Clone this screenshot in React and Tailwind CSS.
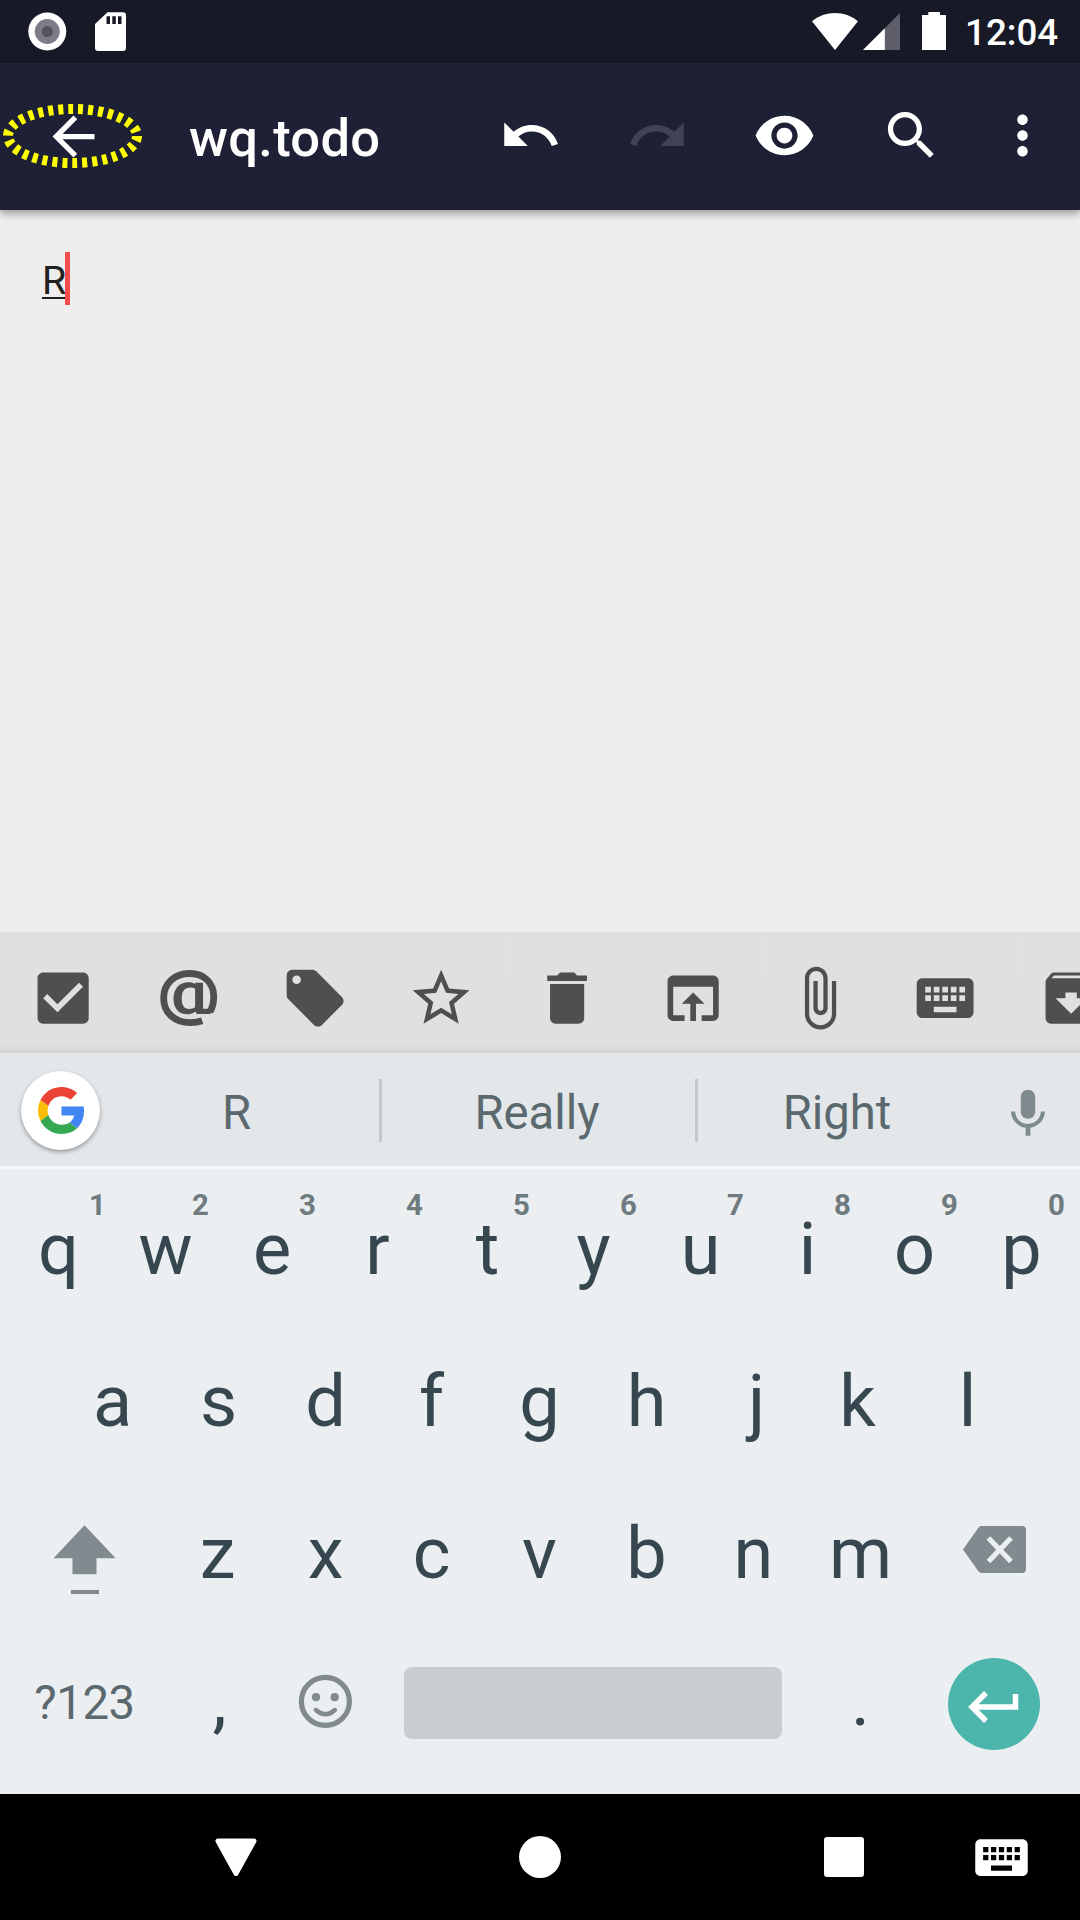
import React from 'react';

const P = {
  back: 'M20 11H7.83l5.59-5.59L12 4l-8 8 8 8 1.41-1.41L7.83 13H20v-2z',
  undo: 'M12.5 8c-2.65 0-5.05.99-6.9 2.6L2 7v9h9l-3.62-3.62c1.39-1.16 3.16-1.88 5.12-1.88 3.54 0 6.55 2.31 7.6 5.5l2.37-.78C21.08 11.03 17.15 8 12.5 8z',
  redo: 'M18.4 10.6C16.55 8.99 14.15 8 11.5 8c-4.65 0-8.58 3.03-9.96 7.22L3.9 16c1.05-3.19 4.05-5.5 7.6-5.5 1.95 0 3.73.72 5.12 1.88L13 16h9V7l-3.6 3.6z',
  eye: 'M12 4.5C7 4.5 2.73 7.61 1 12c1.73 4.39 6 7.5 11 7.5s9.27-3.11 11-7.5c-1.73-4.39-6-7.5-11-7.5zM12 17c-2.76 0-5-2.24-5-5s2.24-5 5-5 5 2.24 5 5-2.24 5-5 5zm0-8c-1.66 0-3 1.34-3 3s1.34 3 3 3 3-1.34 3-3-1.34-3-3-3z',
  search: 'M15.5 14h-.79l-.28-.27C15.41 12.59 16 11.11 16 9.5 16 5.91 13.09 3 9.5 3S3 5.91 3 9.5 5.91 16 9.5 16c1.61 0 3.09-.59 4.23-1.57l.27.28v.79l5 4.99L20.49 19l-4.99-5zm-6 0C7.01 14 5 11.99 5 9.5S7.01 5 9.5 5 14 7.01 14 9.5 11.99 14 9.5 14z',
  more: 'M12 8c1.1 0 2-.9 2-2s-.9-2-2-2-2 .9-2 2 .9 2 2 2zm0 2c-1.1 0-2 .9-2 2s.9 2 2 2 2-.9 2-2-.9-2-2-2zm0 6c-1.1 0-2 .9-2 2s.9 2 2 2 2-.9 2-2-.9-2-2-2z',
  check: 'M19 3H5c-1.11 0-2 .9-2 2v14c0 1.1.89 2 2 2h14c1.11 0 2-.9 2-2V5c0-1.1-.89-2-2-2zm-9 14l-5-5 1.41-1.41L10 14.17l7.59-7.59L19 8l-9 9z',
  tag: 'M21.41 11.58l-9-9C12.05 2.22 11.55 2 11 2H4c-1.1 0-2 .9-2 2v7c0 .55.22 1.05.59 1.42l9 9c.36.36.86.58 1.41.58.55 0 1.05-.22 1.41-.59l7-7c.37-.36.59-.86.59-1.41 0-.55-.23-1.06-.59-1.42zM5.5 7C4.67 7 4 6.33 4 5.5S4.67 4 5.5 4 7 4.67 7 5.5 6.33 7 5.5 7z',
  star: 'M22 9.24l-7.19-.62L12 2 9.19 8.63 2 9.24l5.46 4.73L5.82 21 12 17.27 18.18 21l-1.63-7.03L22 9.24zM12 15.4l-3.76 2.27 1-4.28-3.32-2.88 4.38-.38L12 6.1l1.71 4.04 4.38.38-3.32 2.88 1 4.28L12 15.4z',
  trash: 'M6 19c0 1.1.9 2 2 2h8c1.1 0 2-.9 2-2V7H6v12zM19 4h-3.5l-1-1h-5l-1 1H5v2h14V4z',
  open: 'M19 4H5c-1.11 0-2 .9-2 2v12c0 1.1.89 2 2 2h4v-2H5V8h14v10h-4v2h4c1.1 0 2-.9 2-2V6c0-1.1-.89-2-2-2zm-7 6l-4 4h3v6h2v-6h3l-4-4z',
  clip: 'M16.5 6v11.5c0 2.21-1.79 4-4 4s-4-1.79-4-4V5c0-1.38 1.12-2.5 2.5-2.5s2.5 1.12 2.5 2.5v10.5c0 .55-.45 1-1 1s-1-.45-1-1V6H10v9.5c0 1.38 1.12 2.5 2.5 2.5s2.5-1.12 2.5-2.5V5c0-2.21-1.79-4-4-4S7 2.79 7 5v12.5c0 3.04 2.46 5.5 5.5 5.5s5.5-2.46 5.5-5.5V6h-1.5z',
  keyboard: 'M20 5H4c-1.1 0-1.99.9-1.99 2L2 17c0 1.1.9 2 2 2h16c1.1 0 2-.9 2-2V7c0-1.1-.9-2-2-2zm-9 3h2v2h-2V8zm0 3h2v2h-2v-2zM8 8h2v2H8V8zm0 3h2v2H8v-2zm-1 2H5v-2h2v2zm0-3H5V8h2v2zm9 7H8v-2h8v2zm0-4h-2v-2h2v2zm0-3h-2V8h2v2zm3 3h-2v-2h2v2zm0-3h-2V8h2v2z',
  archive: 'M20.54 5.23l-1.39-1.68C18.88 3.21 18.47 3 18 3H6c-.47 0-.88.21-1.16.55L3.46 5.23C3.17 5.57 3 6.02 3 6.5V19c0 1.1.9 2 2 2h14c1.1 0 2-.9 2-2V6.5c0-.48-.17-.93-.46-1.27zM12 17.5L6.5 12H10v-2h4v2h3.5L12 17.5zM5.12 5l.81-1h12l.94 1H5.12z',
  mic: 'M12 14c1.66 0 2.99-1.34 2.99-3L15 5c0-1.66-1.34-3-3-3S9 3.34 9 5v6c0 1.66 1.34 3 3 3zm5.3-3c0 3-2.54 5.1-5.3 5.1S6.7 14 6.7 11H5c0 3.41 2.72 6.23 6 6.72V21h2v-3.28c3.28-.48 6-3.3 6-6.72h-1.7z',
};

function Icon({ d, className }) {
  return (
    <svg viewBox="0 0 24 24" fill="currentColor" className={className}>
      <path d={d} />
    </svg>
  );
}

function StatusBar() {
  return (
    <div className="flex h-[63px] items-start bg-[#171926] pt-3 text-white">
      <svg className="ml-[28px] h-[39px] w-[39px]" viewBox="0 0 39 39">
        <circle cx="19.3" cy="19.5" r="19" fill="#fff" />
        <circle cx="19.3" cy="19.5" r="12.5" fill="#7c7d87" />
        <circle cx="19.3" cy="19.5" r="5.6" fill="#53545f" />
      </svg>
      <svg className="ml-7 h-[39px] w-[31px]" viewBox="0 0 31 39">
        <path fillRule="evenodd" fill="#fff" d="M12.5.3H28a3 3 0 0 1 3 3V36a3 3 0 0 1-3 3H3a3 3 0 0 1-3-3V12zM11.5 4.3v7.6H15V4.3zM17.3 4.3v7.6h3.5V4.3zM23 4.3v7.6h3.5V4.3z" />
      </svg>
      <svg className="ml-[686px] h-[39px] w-[46px]" viewBox="0 0 46 39">
        <path fill="#fff" d="M0 9.2Q10 .9 23 .9T46 9.2L23 38z" />
      </svg>
      <svg className="ml-[5px] h-[39px] w-[37px]" viewBox="0 0 37 39">
        <path fill="#5d5e69" d="M37 1v37H0z" />
        <path fill="#fff" d="M21.8 16.2V38H0z" />
      </svg>
      <svg className="ml-[22px] h-[39px] w-6" viewBox="0 0 24 39">
        <path fill="#fff" d="M6.3 0h11.6v3H24v35H0V3h6.3z" />
      </svg>
      <span className="ml-[19px] mt-[1px] text-[36.75px] font-medium leading-[40px]">12:04</span>
    </div>
  );
}

function AppBar() {
  return (
    <div className="relative z-10 flex h-[147px] items-center bg-[#1e2035] text-white shadow-[0_3px_9px_rgba(0,0,0,0.4)]">
      <div className="relative ml-[42px] h-[63px] w-[63px]">
        <Icon d={P.back} className="h-[63px] w-[63px]" />
        <svg className="absolute -left-[42px] -top-[5px] h-[72px] w-[147px]" viewBox="0 0 147 72">
          <ellipse cx="72.5" cy="36" rx="64.5" ry="27" fill="none" stroke="#ff0" strokeWidth="10" strokeDasharray="5 5" />
        </svg>
      </div>
      <h1 className="ml-[84px] mt-[3px] w-[278px] text-[52.5px] font-medium leading-[62px] tracking-[0.3px]">wq.todo</h1>
      <div className="flex pb-[2px]">
        <div className="flex w-[127px] justify-center"><Icon d={P.undo} className="h-[63px] w-[63px]" /></div>
        <div className="flex w-[127px] justify-center text-[#414254]"><Icon d={P.redo} className="h-[63px] w-[63px]" /></div>
        <div className="flex w-[127px] justify-center"><Icon d={P.eye} className="h-[63px] w-[63px]" /></div>
        <div className="flex w-[127px] justify-center"><Icon d={P.search} className="h-[63px] w-[63px]" /></div>
        <div className="flex w-[95px] justify-center"><Icon d={P.more} className="h-[63px] w-[63px]" /></div>
      </div>
    </div>
  );
}

function AtIcon() {
  return (
    <svg viewBox="0 0 24 24" fill="none" stroke="currentColor" className="h-[68.25px] w-[68.25px]">
      <path strokeWidth="2.4" d="M16.600 19.950C15.300 20.400 14 20.600 12.500 20.600C6.900 20.600 3.050 17.200 3.050 12S6.900 3.350 12.100 3.350S20.650 6.600 20.650 11.500C20.650 13.600 20.200 15.300 19.350 16.800" />
      <path fill="currentColor" stroke="none" fillRule="evenodd" d="M14.100 6.600H16.900V15.700H20.500L19.500 17.600H14.700L14.200 16.700C13.400 17.300 12.400 17.700 11.300 17.700C8.300 17.700 6.500 15.500 6.500 12.200C6.500 8.700 8.500 6.400 11.700 6.400C12.700 6.400 13.500 6.600 14.100 7zM14.100 8.700C13.500 8.400 13 8.300 12.400 8.300C10.300 8.300 9.400 9.700 9.400 12.200C9.400 14.500 10.200 15.800 12 15.800C12.800 15.800 13.500 15.600 14.100 15.200z" />
    </svg>
  );
}

function Toolbar() {
  const icons = [P.check, 'at', P.tag, P.star, P.trash, P.open, P.clip, P.keyboard, P.archive];
  return (
    <div className="flex h-[121px] shrink-0 overflow-hidden bg-linear-to-b from-[#e0e0e0] from-92% to-[#d2d2d2] text-[#4f4f4f]">
      {icons.map((d, i) => (
        <div key={i} className="flex h-[132px] w-[126px] shrink-0 items-center justify-center">
          {d === 'at' ? <AtIcon /> : <Icon d={d} className="h-[68.25px] w-[68.25px]" />}
        </div>
      ))}
    </div>
  );
}

function Suggestions() {
  return (
    <div className="flex h-[116px] items-start border-b-[3px] border-[#f4f6f8] bg-[#e3e7ea] text-[47.25px] leading-[56px] text-[#5b686e]">
      <div className="ml-[21px] mt-[18px] flex h-[79px] w-[79px] items-center justify-center rounded-full bg-white pl-[2px] shadow-[0_2px_4px_rgba(0,0,0,0.35)]">
        <svg className="h-[47px] w-[47px]" viewBox="0 0 48 48">
          <path fill="#EA4335" d="M24 9.5c3.54 0 6.71 1.22 9.21 3.6l6.85-6.85C35.9 2.38 30.47 0 24 0 14.62 0 6.51 5.38 2.56 13.22l7.98 6.19C12.43 13.72 17.74 9.5 24 9.5z" />
          <path fill="#4285F4" d="M46.98 24.55c0-1.57-.15-3.09-.38-4.55H24v9.02h12.94c-.58 2.96-2.26 5.48-4.78 7.18l7.73 6c4.51-4.18 7.09-10.36 7.09-17.65z" />
          <path fill="#FBBC05" d="M10.53 28.59c-.48-1.45-.76-2.99-.76-4.59s.27-3.14.76-4.59l-7.98-6.19C.92 16.46 0 20.12 0 24c0 3.88.92 7.54 2.56 10.78l7.97-6.19z" />
          <path fill="#34A853" d="M24 48c6.48 0 11.93-2.13 15.89-5.81l-7.73-6c-2.15 1.45-4.92 2.3-8.16 2.3-6.26 0-11.57-4.22-13.47-9.91l-7.98 6.19C6.51 42.62 14.62 48 24 48z" />
        </svg>
      </div>
      <div className="ml-[-6px] mt-[32px] w-[285px] text-center">R</div>
      <div className="mt-[26px] h-[63px] w-[3px] bg-[#c4c8cb]" />
      <div className="mt-[32px] w-[313px] pr-[3px] text-center">Really</div>
      <div className="mt-[26px] h-[63px] w-[3px] bg-[#c4c8cb]" />
      <div className="mt-[32px] w-[278px] text-center">Right</div>
      <Icon d={P.mic} className="ml-[23px] mt-[32px] h-[58px] w-[58px] text-[#7f8a8f]" />
    </div>
  );
}

// Side-bearing correction, so that each letter's ink sits in the middle of its key.
const NUDGE = { r: 'pr-1', j: 'pl-1.5', k: 'pr-1.5', t: 'pl-0.5', z: 'pr-0.5', f: 'pr-0.5', e: 'pr-px', c: 'pr-0.5', a: 'pl-0.5' };

function Key({ label, hint }) {
  return (
    <div className="relative flex h-[152px] w-[107px] shrink-0 justify-center pt-[26px]">
      <span className={`text-[72px] leading-[84px] ${NUDGE[label] || ''}`}>{label}</span>
      {hint && <span className={`absolute top-[6px] text-[29.4px] font-bold leading-[34px] text-[#707b80] ${hint === '1' ? 'left-[84px]' : 'left-[80px]'}`}>{hint}</span>}
    </div>
  );
}

function Keyboard() {
  return (
    <div className="flex h-[625px] flex-col bg-[#ebeff2] pt-[13px] text-[#37474f]">
      <div className="flex pl-[5px]">
        {[...'qwertyuiop'].map((k, i) => <Key key={k} label={k} hint={'1234567890'[i]} />)}
      </div>
      <div className="flex pl-[58px]">
        {[...'asdfghjkl'].map((k) => <Key key={k} label={k} />)}
      </div>
      <div className="flex">
        <svg className="ml-[53px] mt-[39px] h-[70px] w-[63px] text-[#808a8f]" viewBox="0 0 63 70" fill="currentColor">
          <path d="M31.5.2L62.7 33.3H43.5V49.3H19.5V33.3H.5zM18 65h28v4H18z" />
        </svg>
        <div className="w-[49px]" />
        {[...'zxcvbnm'].map((k) => <Key key={k} label={k} />)}
        <svg className="ml-[49px] mt-[40px] h-[48px] w-[63px]" viewBox="0 0 63 48">
          <path fill="#808a8f" d="M18.5 0H59a4 4 0 0 1 4 4V43a4 4 0 0 1-4 4H18.5q-2 0-3.3-2L0 23.5 15.2 2Q16.500 0 18.5 0z" />
          <path d="M25.500 12L48 35.500M48 12L25.500 35.500" stroke="#ebeff2" strokeWidth="5.200" />
        </svg>
      </div>
      <div className="flex h-[156px]">
        <div className="w-[169px] pt-[37px] text-center text-[47.25px] leading-[56px] tracking-[-0.4px] text-[#5b686e]">?123</div>
        <div className="flex w-[103px] justify-center pt-[21px] pr-0.5 text-[72px] leading-[84px]">,</div>
        <svg className="ml-[26px] mt-[36px] h-[54px] w-[54px]" viewBox="0 0 54 54" fill="none" stroke="#808a8f">
          <circle cx="27.400" cy="27.400" r="24" strokeWidth="5.200" />
          <circle cx="18" cy="23.200" r="4.100" fill="#808a8f" stroke="none" />
          <circle cx="36.700" cy="23.200" r="4.100" fill="#808a8f" stroke="none" />
          <path d="M17.900 36Q27.400 44.500 36.900 36" strokeWidth="4.400" strokeLinecap="round" />
        </svg>
        <div className="ml-[52px] mt-[29px] h-[72px] w-[378px] rounded-lg bg-[#c9cdd0]" />
        <div className="ml-[25px] flex w-[107px] justify-center pt-[21px] text-[72px] leading-[84px]">.</div>
        <div className="ml-[34px] mt-[20px] h-[92px] w-[92px] rounded-full bg-[#4db6ac]">
          <svg className="h-[92px] w-[92px]" viewBox="0 0 92 92" fill="none" stroke="#fff" strokeWidth="5.500">
            <path d="M67.500 36V49H25" />
            <path d="M38 35L24 49L38 63" />
          </svg>
        </div>
      </div>
    </div>
  );
}

function NavBar() {
  return (
    <div className="flex h-[126px] items-center bg-black">
      <svg className="ml-[215px] h-[38px] w-[42px]" viewBox="0 0 42 38">
        <path d="M3 3H39L21 35.500z" fill="#fff" stroke="#fff" strokeWidth="5" strokeLinejoin="round" />
      </svg>
      <div className="ml-[262px] h-[42px] w-[42px] rounded-full bg-white" />
      <div className="ml-[263px] h-[40px] w-[40px] rounded-[3px] bg-white" />
      <Icon d={P.keyboard} className="ml-[106px] h-[63px] w-[63px] text-white" />
    </div>
  );
}

export default function App() {
  return (
    <div className="flex h-[1920px] w-[1080px] flex-col overflow-hidden bg-[#eeeeee] font-['Roboto',sans-serif]">
      <StatusBar />
      <AppBar />
      <div className="flex flex-1 items-start pl-[42px] pt-[42px]">
        <div className="pt-[3px] text-[39.4px] leading-[51px] text-[#212121]">
          <span className="block h-[44px] w-6 border-b-2 border-[#212121]">R</span>
        </div>
        <div className="-ml-px h-[53px] w-[5px] bg-[#f44b4b]" />
      </div>
      <Toolbar />
      <Suggestions />
      <Keyboard />
      <NavBar />
    </div>
  );
}
